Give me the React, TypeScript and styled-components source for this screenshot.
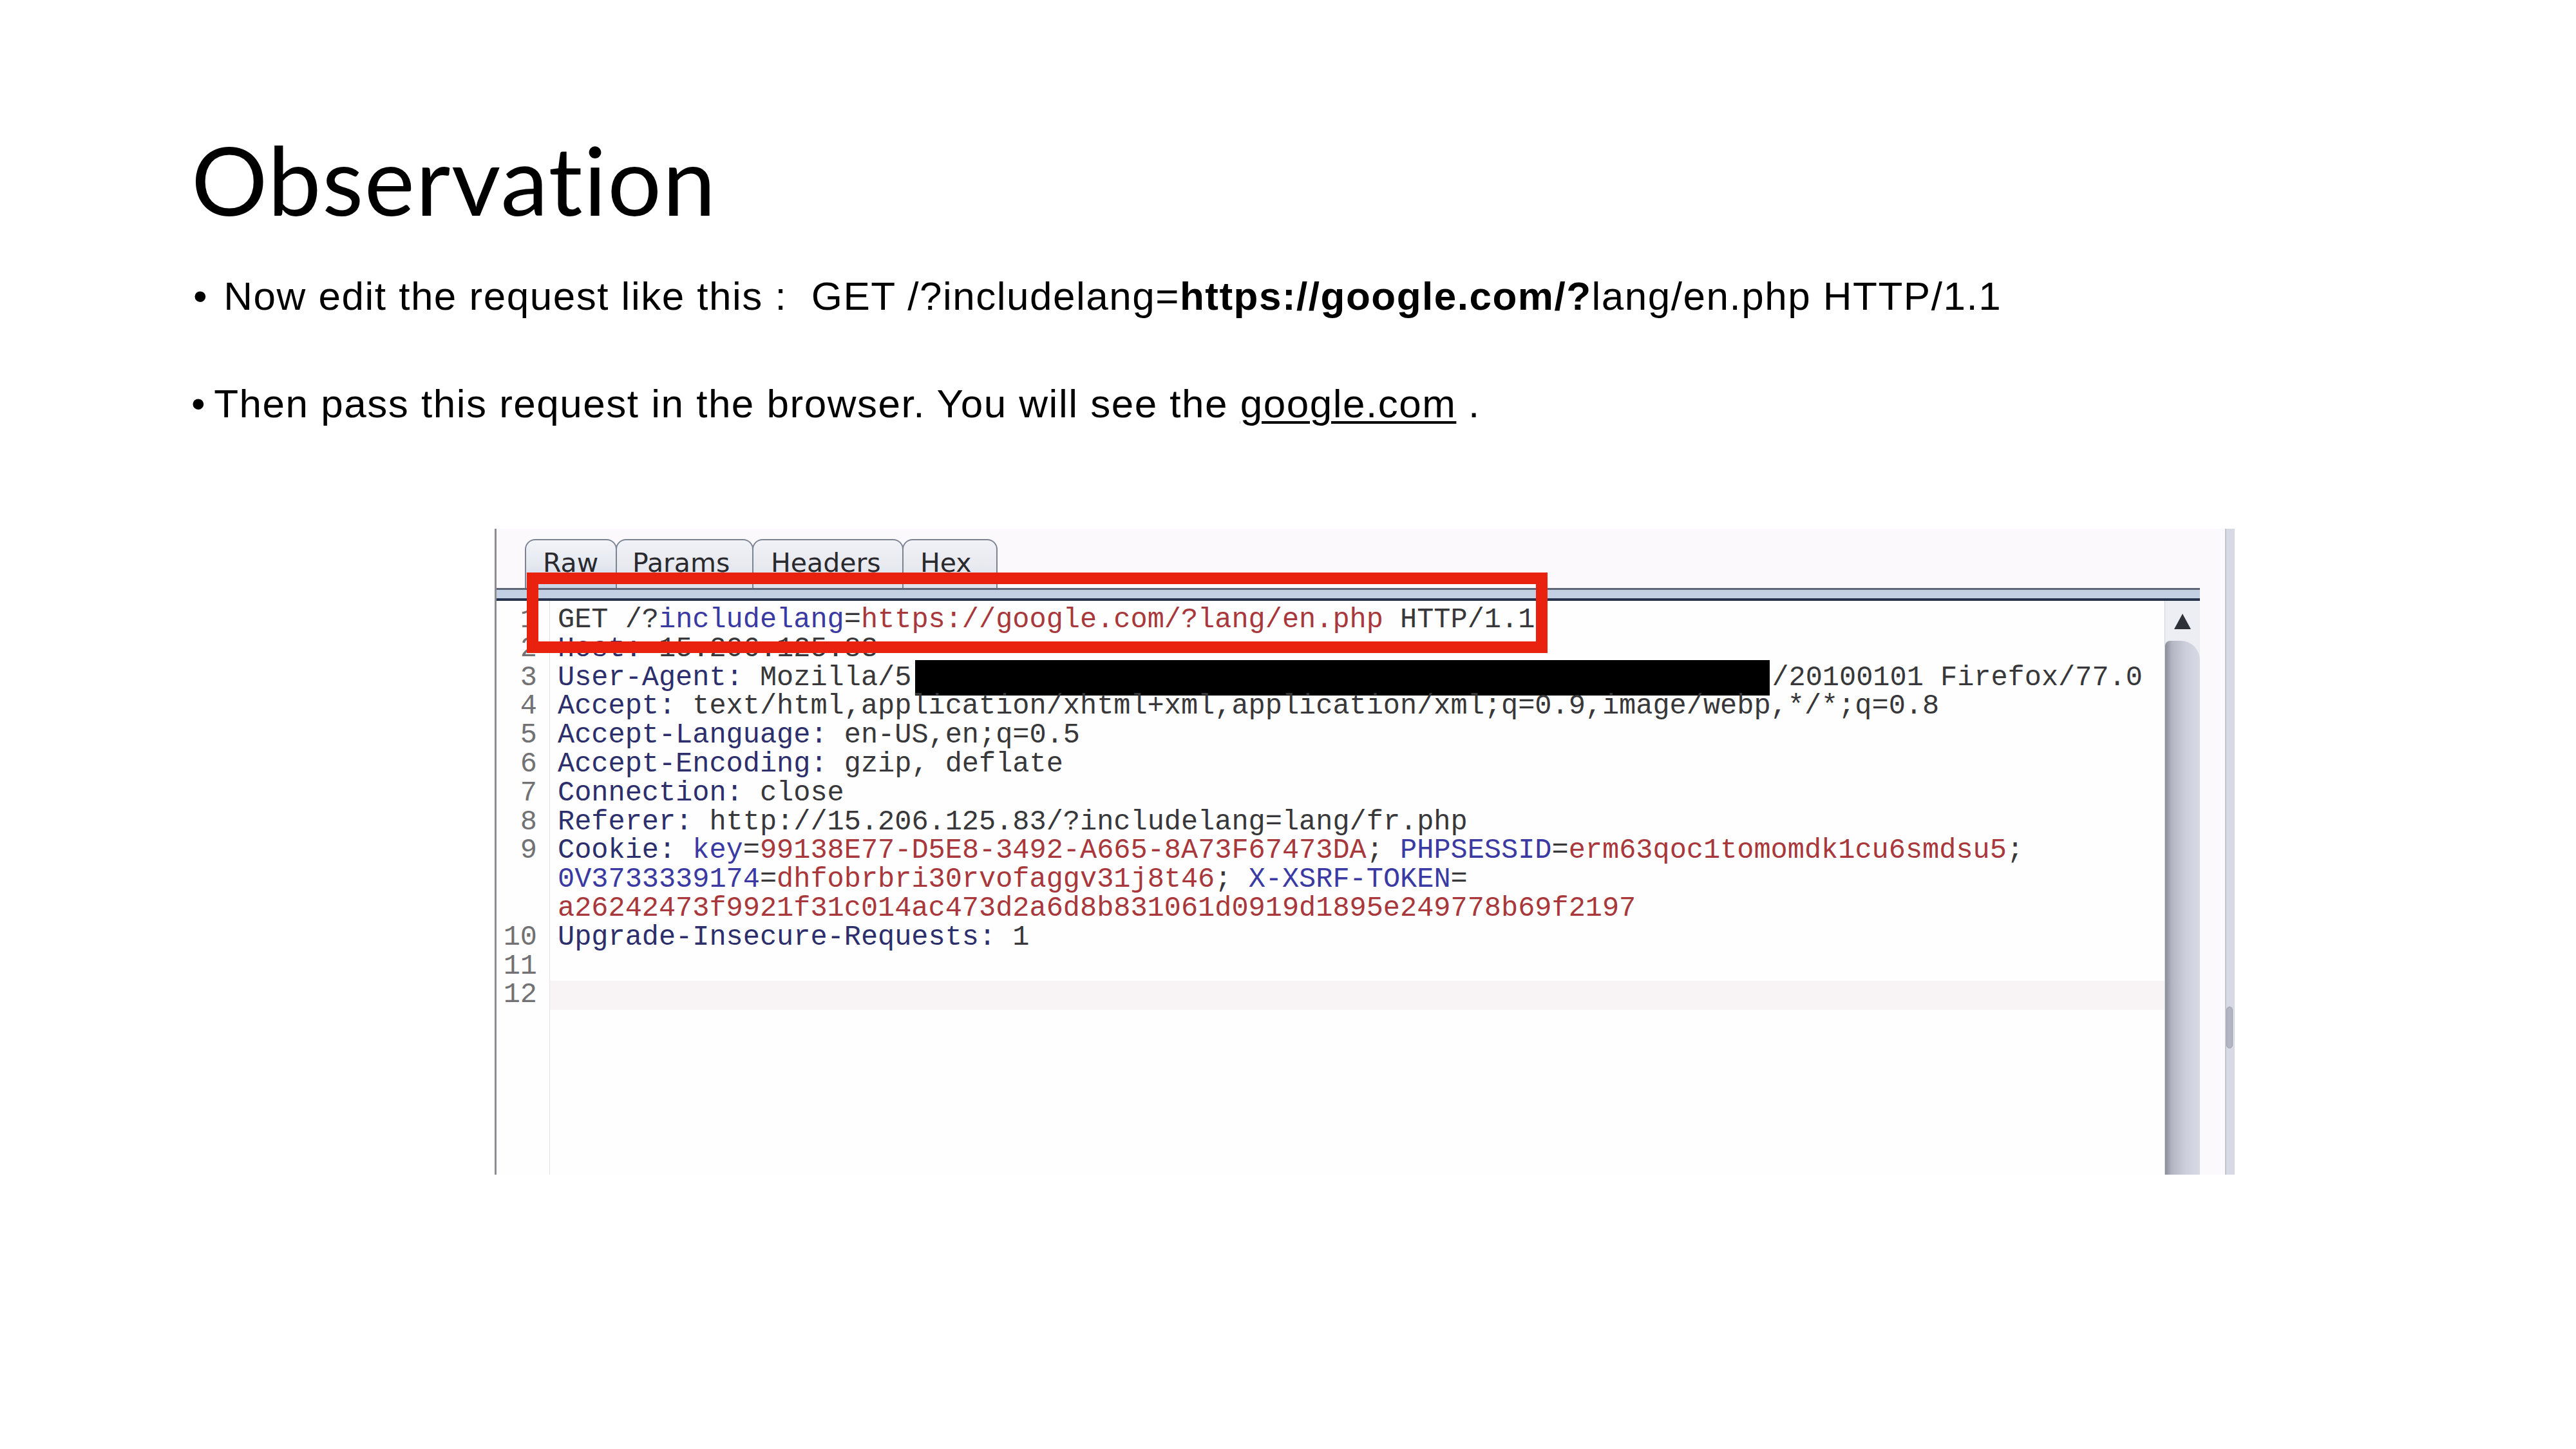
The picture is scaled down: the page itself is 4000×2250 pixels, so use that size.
import React from "react";
import styled, { createGlobalStyle } from "styled-components";

const Global = createGlobalStyle`
  html, body { margin: 0; padding: 0; background: #ffffff; }
`;

const Slide = styled.div`
  width: 4000px;
  height: 2250px;
  box-sizing: border-box;
  padding: 203px 0 0 297px;
  background: #ffffff;
  overflow: hidden;
`;

const Title = styled.h1`
  margin: 0;
  font-family: Lato, "Open Sans", sans-serif;
  font-weight: 400;
  font-size: 148px;
  line-height: 150px;
  letter-spacing: 1.6px;
  color: #000;
`;

const BulletList = styled.ul`
  margin: 70px 0 0 0;
  padding: 0;
  list-style: none;
  display: flex;
  flex-direction: column;
  gap: 93px;
  font-family: "Liberation Sans", Arial, sans-serif;
  font-size: 62px;
  line-height: 74px;
  letter-spacing: 1.5px;
  color: #000;
`;

const BulletItem = styled.li<{ $indent: number }>`
  display: flex;
  align-items: baseline;
  padding-left: ${(p) => p.$indent}px;
  white-space: pre;
`;

const Dot = styled.span<{ $gap: number }>`
  margin-right: ${(p) => p.$gap}px;
`;

const Strong = styled.b`
  font-weight: 700;
`;

const Link = styled.span`
  text-decoration: underline;
  text-decoration-thickness: 4px;
  text-underline-offset: 6px;
`;

/* ---------- screenshot of the request editor ---------- */

const Shot = styled.div`
  position: relative;
  margin: 157px 0 0 471px;
  width: 2702px;
  height: 1003px;
  display: flex;
  background: #fcf9fc;
`;

const MainColumn = styled.div`
  width: 2648px;
  box-sizing: border-box;
  border-left: 3px solid #8d8d92;
  display: flex;
  flex-direction: column;
`;

const TabStrip = styled.div`
  height: 92px;
  box-sizing: border-box;
  padding: 16px 0 0 44px;
  display: flex;
  align-items: flex-end;
`;

const Tab = styled.div<{ $w: number; $indent: number; $active?: boolean }>`
  width: ${(p) => p.$w}px;
  height: 76px;
  box-sizing: border-box;
  margin-right: -2px;
  padding: 15px 0 0 ${(p) => p.$indent}px;
  border: 2px solid #7c8494;
  border-bottom: none;
  border-radius: 16px 16px 0 0;
  background: ${(p) =>
    p.$active
      ? "linear-gradient(#f3f4f8 0%, #e3e7ef 55%, #c8d4e6 100%)"
      : "linear-gradient(#f1f2f6 0%, #dfe2ea 100%)"};
  font-family: "DejaVu Sans", Verdana, sans-serif;
  font-size: 41px;
  line-height: 41px;
  color: #2a2a2e;
  white-space: nowrap;
`;

const Band = styled.div`
  height: 13px;
  border-top: 3px solid #5e6778;
  border-bottom: 4px solid #26334a;
  background: #c3d0e3;
`;

const EditorRow = styled.div`
  flex: 1;
  display: flex;
  min-height: 0;
`;

const Gutter = styled.div`
  width: 82px;
  box-sizing: content-box;
  border-right: 1px solid #e4e2e6;
  background: #fefefe;
  padding-top: 8px;
  font-family: "Liberation Mono", "Courier New", monospace;
  font-size: 43.6px;
  line-height: 44.8px;
  color: #727274;
  text-align: right;
`;

const LineNo = styled.div`
  height: 44.8px;
  padding-right: 19px;
`;

const Code = styled.div`
  flex: 1;
  background: #fefefe;
  padding-top: 8px;
  font-family: "Liberation Mono", "Courier New", monospace;
  font-size: 43.6px;
  line-height: 44.8px;
  color: #38383b;
  white-space: pre;
  overflow: hidden;
`;

const CodeLine = styled.div<{ $current?: boolean }>`
  height: 44.8px;
  padding-left: 12px;
  background: ${(p) => (p.$current ? "#f8f4f6" : "transparent")};
`;

const Tok = styled.span<{ $k: Kind }>`
  color: ${(p) =>
    p.$k === "hname"
      ? "#2c2f6c"
      : p.$k === "pname"
      ? "#3a3aa2"
      : p.$k === "pval"
      ? "#a8383b"
      : "#38383b"};
`;

const Redaction = styled.span`
  display: inline-block;
  vertical-align: middle;
  width: 1327px;
  height: 55px;
  margin: -6px 3px -6px 6px;
  background: #000;
`;

const Scrollbar = styled.div`
  width: 55px;
  display: flex;
  flex-direction: column;
  background: #eceef4;
  border-left: 1px solid #d0d2da;
  box-sizing: border-box;
`;

const UpButton = styled.div`
  height: 62px;
  display: flex;
  justify-content: center;
  padding-top: 20px;
  box-sizing: border-box;
`;

const Thumb = styled.div`
  flex: 1;
  border-radius: 8px 30px 0 0;
  background: linear-gradient(90deg, #8a8c98 0%, #b4b6c3 20%, #cdd0dc 60%, #d7dae5 100%);
`;

const Spacer = styled.div`
  width: 39px;
`;

const OuterStrip = styled.div`
  width: 15px;
  box-sizing: border-box;
  border-left: 2px solid #c3c6d1;
  background: #d7dae4;
  display: flex;
  flex-direction: column;
  padding-top: 742px;
`;

const StripHandle = styled.div`
  width: 10px;
  height: 65px;
  border-radius: 5px;
  background: #b3b5c2;
  border: 1px solid #9fa2b0;
  box-sizing: border-box;
`;

const Highlight = styled.div`
  position: absolute;
  left: 50px;
  top: 68px;
  width: 1585px;
  height: 125px;
  box-sizing: border-box;
  border: 18px solid #e8220e;
  pointer-events: none;
`;

type Kind = "plain" | "hname" | "pname" | "pval";
type Token = { t: string; k: Kind } | { redact: true };

const P = (t: string): Token => ({ t, k: "plain" });
const H = (t: string): Token => ({ t, k: "hname" });
const N = (t: string): Token => ({ t, k: "pname" });
const V = (t: string): Token => ({ t, k: "pval" });

const lines: { no: string; tokens: Token[]; current?: boolean }[] = [
  { no: "1", tokens: [P("GET /?"), N("includelang"), P("="), V("https://google.com/?lang/en.php"), P(" HTTP/1.1")] },
  { no: "2", tokens: [H("Host:"), P(" 15.206.125.83")] },
  { no: "3", tokens: [H("User-Agent:"), P(" Mozilla/5"), { redact: true }, P("/20100101 Firefox/77.0")] },
  { no: "4", tokens: [H("Accept:"), P(" text/html,application/xhtml+xml,application/xml;q=0.9,image/webp,*/*;q=0.8")] },
  { no: "5", tokens: [H("Accept-Language:"), P(" en-US,en;q=0.5")] },
  { no: "6", tokens: [H("Accept-Encoding:"), P(" gzip, deflate")] },
  { no: "7", tokens: [H("Connection:"), P(" close")] },
  { no: "8", tokens: [H("Referer:"), P(" http://15.206.125.83/?includelang=lang/fr.php")] },
  {
    no: "9",
    tokens: [
      H("Cookie:"),
      P(" "),
      N("key"),
      P("="),
      V("99138E77-D5E8-3492-A665-8A73F67473DA"),
      P("; "),
      N("PHPSESSID"),
      P("="),
      V("erm63qoc1tomomdk1cu6smdsu5"),
      P(";"),
    ],
  },
  { no: "", tokens: [N("0V3733339174"), P("="), V("dhfobrbri30rvofaggv31j8t46"), P("; "), N("X-XSRF-TOKEN"), P("=")] },
  { no: "", tokens: [V("a26242473f9921f31c014ac473d2a6d8b831061d0919d1895e249778b69f2197")] },
  { no: "10", tokens: [H("Upgrade-Insecure-Requests:"), P(" 1")] },
  { no: "11", tokens: [] },
  { no: "12", tokens: [], current: true },
];

const tabs = [
  { label: "Raw", w: 143, indent: 26, active: true },
  { label: "Params", w: 214, indent: 24 },
  { label: "Headers", w: 235, indent: 27 },
  { label: "Hex", w: 148, indent: 26 },
];

export default function App() {
  return (
    <>
      <Global />
      <Slide>
        <Title>Observation</Title>
        <BulletList>
          <BulletItem $indent={3}>
            <Dot $gap={24}>•</Dot>
            <span>
              Now edit the request like this :  GET /?includelang=<Strong>https://google.com/?</Strong>lang/en.php HTTP/1.1
            </span>
          </BulletItem>
          <BulletItem $indent={0}>
            <Dot $gap={12}>•</Dot>
            <span>
              Then pass this request in the browser. You will see the <Link>google.com</Link> .
            </span>
          </BulletItem>
        </BulletList>

        <Shot>
          <MainColumn>
            <TabStrip>
              {tabs.map((t) => (
                <Tab key={t.label} $w={t.w} $indent={t.indent} $active={t.active}>
                  {t.label}
                </Tab>
              ))}
            </TabStrip>
            <Band />
            <EditorRow>
              <Gutter>
                {lines.map((l, i) => (
                  <LineNo key={i}>{l.no}</LineNo>
                ))}
              </Gutter>
              <Code>
                {lines.map((l, i) => (
                  <CodeLine key={i} $current={l.current}>
                    {l.tokens.map((tk, j) =>
                      "redact" in tk ? (
                        <Redaction key={j} />
                      ) : (
                        <Tok key={j} $k={tk.k}>
                          {tk.t}
                        </Tok>
                      )
                    )}
                  </CodeLine>
                ))}
              </Code>
              <Scrollbar>
                <UpButton>
                  <svg width="26" height="24" viewBox="0 0 26 24">
                    <polygon points="13,0 26,24 0,24" fill="#2f3138" />
                  </svg>
                </UpButton>
                <Thumb />
              </Scrollbar>
            </EditorRow>
          </MainColumn>
          <Spacer />
          <OuterStrip>
            <StripHandle />
          </OuterStrip>
          <Highlight />
        </Shot>
      </Slide>
    </>
  );
}
